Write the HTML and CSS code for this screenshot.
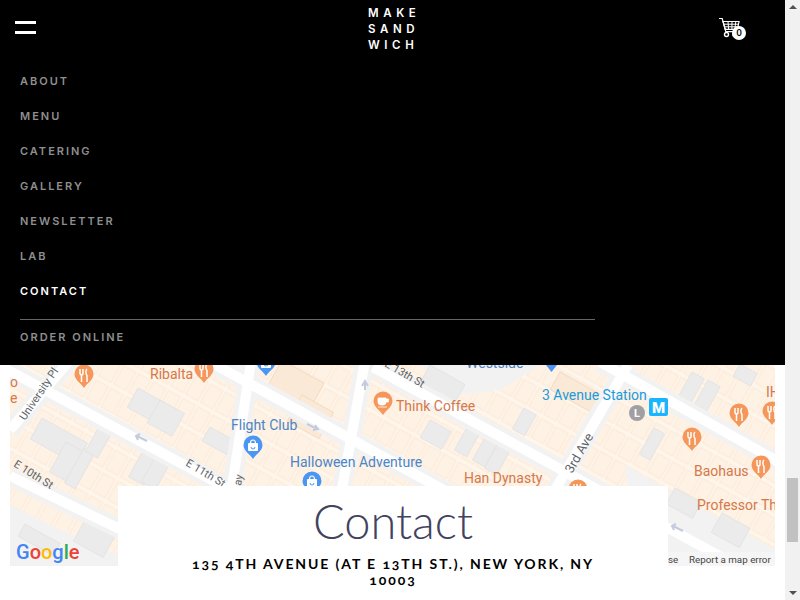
FILE: index.html
```html
<!DOCTYPE html>
<html lang="en">
<head>
<meta charset="utf-8">
<title>Make Sandwich</title>
<link rel="stylesheet" href="styles.css">
</head>
<body>
<div class="page">
  <main class="main">
    <header class="nav">
      <div class="topbar">
        <button class="burger" aria-label="Menu"><span></span><span></span></button>
        <div class="logo">MAKE<br>SAND<br>WICH</div>
        <div class="cart">
          <svg class="cart-icon" width="24" height="22" viewBox="0 0 24 22">
            <path d="M1 1.500h3.200l3.600 13.200h11.400" fill="none" stroke="#fff" stroke-width="1.200"/>
            <path d="M5 4.500h16l-1.600 7.800H7.200z" fill="none" stroke="#fff" stroke-width="1.200"/>
            <path d="M10 4.500l.6 7.800M14 4.500l-.1 7.800M17.800 4.500l-1 7.800M5.800 7.200h15M6.600 9.800h13.600" fill="none" stroke="#fff" stroke-width="1"/>
            <circle cx="8.500" cy="17.500" r="2" fill="none" stroke="#fff" stroke-width="1.400"/>
            <circle cx="17" cy="17.500" r="2" fill="none" stroke="#fff" stroke-width="1.400"/>
          </svg>
          <span class="badge">0</span>
        </div>
      </div>
      <nav class="links">
        <a class="link">ABOUT</a>
        <a class="link">MENU</a>
        <a class="link">CATERING</a>
        <a class="link">GALLERY</a>
        <a class="link">NEWSLETTER</a>
        <a class="link">LAB</a>
        <a class="link active">CONTACT</a>
      </nav>
      <div class="divider"></div>
      <a class="link order">ORDER ONLINE</a>
    </header>

    <section class="map">
      <svg class="map-svg" width="765" height="201" viewBox="10 365 765 201">
        <defs>
          <pattern id="parcels" width="17" height="26" patternUnits="userSpaceOnUse" patternTransform="translate(12 4) rotate(29)">
            <rect width="17" height="26" fill="#fef5eb"/>
            <rect x="1" y="2" width="14" height="21" fill="#fef2e5" stroke="#fce6d2" stroke-width=".8"/>
          </pattern>
          <g id="pin-food">
            <path d="M0 12 C-3 7 -9.500 4 -9.500 -2 A9.500 9.500 0 1 1 9.500 -2 C9.500 4 3 7 0 12z" fill="#f5975a"/>
            <path d="M-4 -7v4.500a1.500 1.500 0 0 0 3 0v-4.500M-2.500 -1v7M3 -7c-1.500 1 -1.500 5 0 6.500v6.500" fill="none" stroke="#fff" stroke-width="1.500"/>
          </g>
          <g id="pin-shop">
            <path d="M0 12 C-3 7 -9.500 4 -9.500 -2 A9.500 9.500 0 1 1 9.500 -2 C9.500 4 3 7 0 12z" fill="#4b96f3"/>
            <rect x="-5" y="-4" width="10" height="8" rx="1" fill="#fff"/>
            <path d="M-2.500 -4a2.500 3 0 0 1 5 0" fill="none" stroke="#fff" stroke-width="1.200"/>
            <path d="M-2 0a2 2 0 0 0 4 0" fill="none" stroke="#4b96f3" stroke-width="1"/>
          </g>
          <g id="pin-coffee">
            <path d="M0 12 C-3 7 -9.500 4 -9.500 -2 A9.500 9.500 0 1 1 9.500 -2 C9.500 4 3 7 0 12z" fill="#f5975a"/>
            <path d="M-5 -5h8v4a3 3 0 0 1 -3 3h-2a3 3 0 0 1 -3 -3zM3 -4h2.500v3h-2.500M-5 4h9" fill="#fff" stroke="#fff" stroke-width=".8"/>
          </g>
        </defs>
        <rect class="land" x="10" y="365" width="765" height="201"/>

        <g class="gray-zones">
          <polygon points="10,505 60,530 118,555 118,566 10,566"/>
          <polygon points="668,490 775,550 775,566 668,566"/>
          <polygon points="625,465 668,490 700,510 660,530 630,500"/>
          <polygon points="420,365 540,365 500,390 460,395"/>
        </g>

        <g class="tan">
          <rect width="48" height="42" transform="translate(282 360) rotate(29)"/>
          <rect width="36" height="30" transform="translate(302 395) rotate(29)"/>
          <rect width="60" height="20" transform="translate(560 372) rotate(29)"/>
        </g>

        <g class="bldg">
          <rect width="52" height="24" transform="translate(42 418) rotate(29)"/>
          <rect width="26" height="34" transform="translate(66 442) rotate(29)"/>
          <rect width="12" height="40" transform="translate(84 448) rotate(29)"/>
          <rect width="14" height="30" transform="translate(100 425) rotate(29)"/>
          <rect width="18" height="34" transform="translate(145 447) rotate(29)"/>
          <rect width="16" height="34" transform="translate(158 452) rotate(29)"/>
          <rect width="36" height="22" transform="translate(138 388) rotate(29)"/>
          <rect width="28" height="26" transform="translate(160 400) rotate(29)"/>
          <rect width="28" height="16" transform="translate(210 427) rotate(29)"/>
          <rect width="40" height="14" transform="translate(25 524) rotate(29)"/>
          <rect width="34" height="24" transform="translate(85 520) rotate(29)"/>
          <rect width="40" height="24" transform="translate(430 365) rotate(29)"/>
          <rect width="24" height="20" transform="translate(430 420) rotate(29)"/>
          <rect width="14" height="32" transform="translate(470 422) rotate(29)"/>
          <rect width="14" height="32" transform="translate(488 432) rotate(29)"/>
          <rect width="14" height="32" transform="translate(500 440) rotate(29)"/>
          <rect width="14" height="24" transform="translate(524 408) rotate(29)"/>
          <rect width="14" height="28" transform="translate(692 372) rotate(29)"/>
          <rect width="14" height="28" transform="translate(708 380) rotate(29)"/>
          <rect width="12" height="30" transform="translate(654 428) rotate(29)"/>
          <rect width="32" height="22" transform="translate(722 513) rotate(29)"/>
          <rect width="20" height="14" transform="translate(740 364) rotate(29)"/>
          <rect width="30" height="18" transform="translate(675 488) rotate(29)"/>
        </g>

        <g class="sidewalks">
          <path d="M-20 355L240 495M10 476L130 534M170 340L480 510M373 367L800 600M600 362L800 474"/>
          <path d="M10 430L70 360M252 355L230 500M366 355L340 500M628 365L555 490"/>
        </g>
        <g class="roads">
          <path d="M-20 355L240 495M10 476L130 534M170 340L480 510M373 367L800 600M600 362L800 474"/>
          <path d="M10 430L70 360M252 355L230 500M366 355L340 500M628 365L555 490"/>
        </g>

        <path class="arrow" d="M137 436l10 5M140 434l-4 2 2 4M307 424l10 5M315 425l3 4-5 1M365 390v-8M362 386l3-5 3 5M673 526l10 5M676 524l-4 2 2 4"/>

        <text class="street" transform="translate(25 421) rotate(-56)">University Pl</text>
        <text class="street" transform="translate(185 465) rotate(31)">E 11th St</text>
        <text class="street" transform="translate(13 466) rotate(32)">E 10th St</text>
        <text class="street" transform="translate(384 366) rotate(30)">E 13th St</text>
        <text class="street" transform="translate(241 486) rotate(-80)">ay</text>
        <text class="street avenue" transform="translate(572 474) rotate(-60)">3rd Ave</text>

        <text class="poi orange" x="396" y="411">Think Coffee</text>
        <text class="poi orange" x="150" y="379">Ribalta</text>
        <text class="poi orange" x="10" y="387">o</text>
        <text class="poi orange" x="10" y="403">e</text>
        <text class="poi orange" x="464" y="483">Han Dynasty</text>
        <text class="poi orange" x="694" y="476">Baohaus</text>
        <text class="poi orange" x="697" y="510">Professor Th</text>
        <text class="poi orange" x="766" y="397">IH</text>
        <text class="poi blue" x="231" y="430">Flight Club</text>
        <text class="poi blue" x="290" y="467">Halloween Adventure</text>
        <text class="poi blue" x="466" y="368">Westside</text>
        <text class="poi station" x="542" y="400">3 Avenue Station</text>

        <use href="#pin-food" x="84" y="376"/>
        <use href="#pin-food" x="204" y="371"/>
        <use href="#pin-food" x="739" y="415"/>
        <use href="#pin-food" x="772" y="413"/>
        <use href="#pin-food" x="692" y="439"/>
        <use href="#pin-food" x="761" y="467"/>
        <use href="#pin-food" x="578" y="491"/>
        <use href="#pin-coffee" x="383" y="403"/>
        <use href="#pin-shop" x="253" y="447"/>
        <use href="#pin-shop" x="312" y="483"/>
        <use href="#pin-shop" x="266" y="364"/>
        <path d="M546 365h11l-5.500 7z" fill="#4b96f3"/>

        <circle cx="637" cy="413" r="8" fill="#a0a0a4"/>
        <text class="l-mark" x="637" y="417">L</text>
        <rect x="649" y="398" width="19" height="18" rx="2" fill="#19b5fe"/>
        <text class="m-mark" x="658.500" y="413">M</text>

        <text class="google" x="16" y="559"><tspan fill="#4285f4">G</tspan><tspan fill="#ea4335">o</tspan><tspan fill="#fbbc05">o</tspan><tspan fill="#4285f4">g</tspan><tspan fill="#34a853">l</tspan><tspan fill="#ea4335">e</tspan></text>

        <rect class="attrib-bg" x="668" y="552" width="107" height="14"/>
        <text class="attrib" x="668" y="563">se</text>
        <text class="attrib" x="689" y="563">Report a map error</text>
      </svg>
    </section>

    <section class="card">
      <h1 class="title">Contact</h1>
      <p class="address">135 4TH AVENUE (AT E 13TH ST.), NEW YORK, NY 10003</p>
    </section>
  </main>

  <aside class="scrollbar">
    <span class="arrow-up"></span>
    <div class="track"><div class="thumb"></div></div>
    <span class="arrow-down"></span>
  </aside>
</div>
</body>
</html>
```
FILE: styles.css
```css
* { box-sizing: border-box; }
html, body { margin: 0; padding: 0; background: #fff; }
body { font-family: "Lato", "Liberation Sans", sans-serif; }

.page { display: flex; width: 800px; height: 600px; overflow: hidden; }
.main { flex: 1; min-width: 0; display: flex; flex-direction: column; }

.nav { height: 365px; flex: none; background: #000; padding: 0 20px; display: flex; flex-direction: column; }
.topbar { height: 64px; flex: none; display: flex; justify-content: space-between; align-items: flex-start; margin: 0 20px 0 -5px; position: relative; }
.burger { margin: 21px 0 0; padding: 0; width: 21px; height: 13px; border: 0; background: none; display: flex; flex-direction: column; justify-content: space-between; }
.burger span { display: block; height: 3px; background: #fff; }
.logo { position: absolute; left: 353px; top: 5px; color: #fff; font-family: "Inter", sans-serif; font-size: 11.5px; font-weight: 600; letter-spacing: 4.6px; line-height: 16px; }
.cart { position: relative; width: 27px; height: 26px; margin-top: 17px; }
.cart-icon { display: block; }
.badge { position: absolute; left: 14px; top: 9px; width: 14px; height: 14px; border-radius: 50%; background: #fff; color: #000; font-size: 9px; font-weight: 700; line-height: 14px; text-align: center; }

.links { display: flex; flex-direction: column; }
.link { display: block; height: 35px; line-height: 35px; color: #8f8f8f; font-family: "Inter", sans-serif; font-size: 11px; font-weight: 600; letter-spacing: 2px; }
.link.active { color: #fff; }
.divider { width: 575px; height: 1px; background: #666; margin-top: 10px; flex: none; }
.link.order { margin-top: 0; }

.map { flex: none; height: 201px; margin: 0 10px; }
.map-svg { display: block; }
.land { fill: url(#parcels); }
.gray-zones polygon { fill: #f2f2f2; }
.tan rect { fill: #fbe9d7; stroke: #f5dcc2; stroke-width: 1; }
.bldg rect { fill: #ebebeb; stroke: #e2e2e2; stroke-width: .8; }
.sidewalks path { fill: none; stroke: #f2f2f3; stroke-width: 19; }
.roads path { fill: none; stroke: #fff; stroke-width: 10; }
.arrow { fill: none; stroke: #c5cbdc; stroke-width: 2; }
.street { font-family: "Roboto", sans-serif; font-size: 11px; fill: #5e6468; }
.street.avenue { font-size: 13px; }
.poi { font-family: "Roboto", sans-serif; font-size: 14px; }
.orange { fill: #d5784a; }
.blue { fill: #4d84c4; }
.station { fill: #1a9bdb; }
.l-mark { font-family: "Roboto", sans-serif; font-size: 11px; font-weight: 700; fill: #fff; text-anchor: middle; }
.m-mark { font-family: "Roboto", sans-serif; font-size: 15px; font-weight: 900; fill: #fff; text-anchor: middle; }
.google { font-family: "Roboto", sans-serif; font-size: 20px; font-weight: 500; }
.attrib-bg { fill: #f5f5f5; fill-opacity: .8; }
.attrib { font-family: "Roboto", sans-serif; font-size: 9.8px; fill: #444; }

.card { flex: none; width: 550px; margin: -80px 0 0 118px; background: #fff; position: relative; text-align: center; padding: 0 60px; }
.title { margin: 8px 0 0; color: #42435f; font-size: 47px; font-weight: 300; line-height: 54px; }
.address { margin: 8px 0 0; color: #000; font-size: 14px; font-weight: 700; letter-spacing: 1.9px; line-height: 16px; font-variant-numeric: oldstyle-nums; }

.scrollbar { flex: none; width: 15px; background: #f1f1f1; position: relative; display: flex; flex-direction: column; align-items: center; }
.arrow-up { margin-top: 5px; width: 0; height: 0; border: 4px solid transparent; border-top: 0; border-bottom: 4px solid #505050; flex: none; }
.track { flex: 1; width: 100%; padding-top: 469px; }
.thumb { width: 11px; height: 64px; margin: 0 auto; background: #c1c1c1; }
.arrow-down { margin-bottom: 5px; width: 0; height: 0; border: 4px solid transparent; border-bottom: 0; border-top: 4px solid #505050; flex: none; }
```
